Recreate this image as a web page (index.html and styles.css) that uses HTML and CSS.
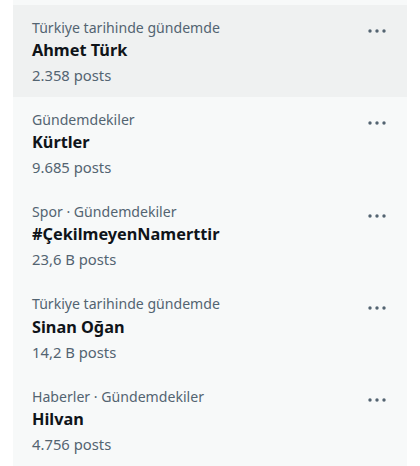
FILE: index.html
```html
<!DOCTYPE html>
<html lang="tr">
<head>
  <meta charset="UTF-8" />
  <meta name="viewport" content="width=device-width, initial-scale=1.0" />
  <title>Gündemdekiler</title>
  <link rel="stylesheet" href="styles.css">
</head>
<body>
  <div class="trends">
    <div class="trend hover">
      <div class="trend-text">
        <div class="trend-meta">Türkiye tarihinde gündemde</div>
        <div class="trend-name">Ahmet Türk</div>
        <div class="trend-count">2.358 posts</div>
      </div>
      <svg class="more" viewBox="0 0 24 24"><circle cx="5" cy="12" r="1.7"/><circle cx="12" cy="12" r="1.7"/><circle cx="19" cy="12" r="1.7"/></svg>
    </div>
    <div class="trend">
      <div class="trend-text">
        <div class="trend-meta">Gündemdekiler</div>
        <div class="trend-name">Kürtler</div>
        <div class="trend-count">9.685 posts</div>
      </div>
      <svg class="more" viewBox="0 0 24 24"><circle cx="5" cy="12" r="1.7"/><circle cx="12" cy="12" r="1.7"/><circle cx="19" cy="12" r="1.7"/></svg>
    </div>
    <div class="trend">
      <div class="trend-text">
        <div class="trend-meta">Spor · Gündemdekiler</div>
        <div class="trend-name">#ÇekilmeyenNamerttir</div>
        <div class="trend-count">23,6 B posts</div>
      </div>
      <svg class="more" viewBox="0 0 24 24"><circle cx="5" cy="12" r="1.7"/><circle cx="12" cy="12" r="1.7"/><circle cx="19" cy="12" r="1.7"/></svg>
    </div>
    <div class="trend">
      <div class="trend-text">
        <div class="trend-meta">Türkiye tarihinde gündemde</div>
        <div class="trend-name">Sinan Oğan</div>
        <div class="trend-count">14,2 B posts</div>
      </div>
      <svg class="more" viewBox="0 0 24 24"><circle cx="5" cy="12" r="1.7"/><circle cx="12" cy="12" r="1.7"/><circle cx="19" cy="12" r="1.7"/></svg>
    </div>
    <div class="trend">
      <div class="trend-text">
        <div class="trend-meta">Haberler · Gündemdekiler</div>
        <div class="trend-name">Hilvan</div>
        <div class="trend-count">4.756 posts</div>
      </div>
      <svg class="more" viewBox="0 0 24 24"><circle cx="5" cy="12" r="1.7"/><circle cx="12" cy="12" r="1.7"/><circle cx="19" cy="12" r="1.7"/></svg>
    </div>
  </div>
</body>
</html>
```

FILE: styles.css
```css
body {
  margin: 0;
  padding: 0 13px;
  background-color: #ffffff;
  font-family: 'Noto Sans', 'Open Sans', sans-serif;
}
.trends {
  width: 394px;
  background-color: #f7f9f9;
  padding-top: 5px;
}
.trend {
  display: flex;
  justify-content: space-between;
  align-items: flex-start;
  padding: 13.5px 18px 13.5px 19px;
}
.trend.hover {
  background-color: #eff1f1;
}
.trend-meta {
  color: #536471;
  font-size: 14.1px;
  line-height: 18px;
}
.trend-name {
  color: #0f1419;
  font-size: 16.3px;
  font-weight: 700;
  line-height: 22.5px;
  padding-top: 2.25px;
}
.trend-count {
  color: #536471;
  font-size: 14.8px;
  line-height: 18px;
  padding-top: 4.5px;
}
.more {
  width: 24px;
  height: 24px;
  margin-top: 0.5px;
  fill: #536471;
}
```
